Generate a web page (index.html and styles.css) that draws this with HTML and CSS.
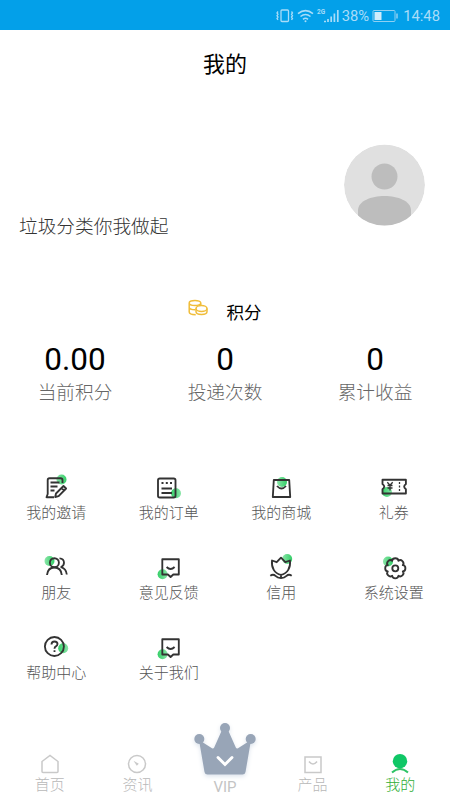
FILE: index.html
```html
<!DOCTYPE html>
<html lang="zh-CN">
<head>
<meta charset="utf-8">
<title>我的</title>
<link rel="stylesheet" href="styles.css">
</head>
<body>
<svg class="defs" width="0" height="0">
  <defs>
    <linearGradient id="blob"><stop offset="0" stop-color="#35cf68"/><stop offset="1" stop-color="#8ae5a8"/></linearGradient>
    <linearGradient id="blobr"><stop offset="0" stop-color="#8ae5a8"/><stop offset="1" stop-color="#35cf68"/></linearGradient>
  </defs>
</svg>
<div class="screen">
  <header class="status">
    <svg width="66" height="18" viewBox="0 0 66 18" fill="none" stroke="#a9dcf8" stroke-width="1.3">
      <rect x="6" y="3" width="7.500" height="11.500" rx="1"/>
      <path d="M3 4.500l-1 1.400 1 1.400-1 1.400 1 1.400-1 1.400 1 1.400M16.500 4.500l1 1.400-1 1.400 1 1.400-1 1.400 1 1.400-1 1.400"/>
      <path d="M23 6.600q7.500-6 15 0M25.500 9.500q5-4 10 0M28 12.300q2.500-2 5 0" stroke-width="1.600"/>
      <circle cx="30.500" cy="14.300" r="1" fill="#a9dcf8" stroke="none"/>
      <path d="M49 14.500h2M53 15v-3M56.200 15V9.500M59.400 15V6.500M62.800 15V3" stroke-width="1.700"/>
      <text x="42" y="7" class="net">2G</text>
    </svg>
    <span class="percent">38%</span>
    <svg class="battery" width="27" height="14" viewBox="0 0 27 14">
      <rect x="1" y="1.500" width="22" height="11" rx="1" fill="none" stroke="#8fd0f2"/>
      <path d="M2.500 3h7v8h-7z" fill="#d0ecfb"/><path d="M25 4.500v5" stroke="#8fd0f2" stroke-width="1.500"/>
    </svg>
    <span class="time">14:48</span>
  </header>
  <h1 class="title">我的</h1>
  <section class="profile">
    <p class="slogan">垃圾分类你我做起</p>
    <svg width="82" height="82" viewBox="0 0 82 82">
      <clipPath id="face"><circle cx="41.500" cy="41" r="40.500"/></clipPath>
      <g clip-path="url(#face)"><circle cx="41.500" cy="41" r="40.500" fill="#e0e0e0"/>
      <circle cx="41.500" cy="32.500" r="13" fill="#bdbdbd"/>
      <path d="M15 82V66C15.500 57 28 52 41.500 52S67.500 57 68 66v16z" fill="#bdbdbd"/></g>
    </svg>
  </section>
  <section class="points">
    <div class="points-head">
      <svg width="20" height="18" viewBox="0 0 20 18" fill="none" stroke="#f0bd3a" stroke-width="1.500">
        <path d="M1.200 4C1.200 .600 12.800 .600 12.800 4M1.200 4c0 3.400 11.600 3.400 11.600 0M1.200 4v9c0 1.600 2.700 2.700 6.500 2.700M1.200 8c0 1.800 2.600 2.800 6 2.800M12.800 4v2"/>
        <ellipse cx="13.500" cy="9.500" rx="5.500" ry="3"/><path d="M8 9.500v3c0 4 11 4 11 0v-3"/>
      </svg>
      <span>积分</span>
    </div>
    <div class="stats">
      <div class="stat"><b>0.00</b><span>当前积分</span></div>
      <div class="stat"><b>0</b><span>投递次数</span></div>
      <div class="stat"><b>0</b><span>累计收益</span></div>
    </div>
  </section>
  <nav class="menu">
    <a class="item"><svg class="icon" viewBox="0 0 32 28"><circle cx="21.500" cy="6.500" r="5" fill="url(#blobr)"/><path d="M22.500 10V7q0-1.800-1.800-1.800H9.500Q7.700 5.200 7.700 7v14l-1.200 3.200h7.500M10.500 9.500h9M10.500 13.500h7M10.500 17.500h4M16 20.500l7.500-7.500 2.600 2.500-7.500 7.700-3.400.8zM21.500 15l2.600 2.600"/></svg><span>我的邀请</span></a>
    <a class="item"><svg class="icon" viewBox="0 0 32 28"><circle cx="23" cy="20.300" r="5" fill="url(#blob)"/><rect x="5" y="5.500" width="17.500" height="19" rx="1.800"/><path d="M8.500 10h2M12.800 10h2M17 10h2M8.500 15.500h10.500M8.500 20h10.500"/></svg><span>我的订单</span></a>
    <a class="item"><svg class="icon" viewBox="0 0 32 28"><circle cx="17" cy="9" r="5" fill="url(#blobr)"/><path d="M8.800 7h15.400l1 17H7.800zM12 13q4.500 5 9 0"/></svg><span>我的商城</span></a>
    <a class="item"><svg class="icon" viewBox="0 0 32 28"><circle cx="9" cy="19" r="5" fill="url(#blob)"/><path d="M4.500 6.700h23.400v4.200q-3.500 2.600 0 5.400v4.200H4.500v-4.200q3.500-2.800 0-5.400z"/><path d="M9.300 9.300l2.700 3 2.700-3M12 12.300V17.500M9.500 12.500h5M9.500 15h5M21.500 9v2M21.500 12.500v2M21.500 16v2" stroke-width="1.300"/></svg><span>礼券</span></a>
    <a class="item"><svg class="icon" viewBox="0 0 32 28"><circle cx="9.500" cy="8" r="5" fill="url(#blobr)"/><circle cx="14.400" cy="9.700" r="4.500"/><path d="M7 22q.8-7.500 7.400-7.500T21.800 22M19.500 5.300q4.500.2 4.500 4.500 0 2.700-2.800 4.300 5 1.500 5.600 7.400"/></svg><span>朋友</span></a>
    <a class="item"><svg class="icon" viewBox="0 0 32 28"><circle cx="9.600" cy="21.300" r="5" fill="url(#blob)"/><path d="M9.300 6.200h16.500v15.300h-5.500L17.600 24l-2.700-2.500H9.300zM13.600 14q4 4 8 0"/></svg><span>意见反馈</span></a>
    <a class="item"><svg class="icon" viewBox="0 0 32 28"><circle cx="22.200" cy="6" r="5" fill="url(#blobr)"/><path d="M7 7.500l4.700 1.700L16 4.700l4.300 4.500L25 7.500c.8 7-2.500 13.300-9 14.300-6.500-1-9.800-7.300-9-14.300zM16 22v3M5.300 22.700q3-2 5.200.2 2 2 5.500 2.300 3.500-.3 5.500-2.300 2.200-2.200 5.200-.2"/></svg><span>信用</span></a>
    <a class="item"><svg class="icon" viewBox="0 0 32 28"><circle cx="10" cy="8.500" r="5" fill="url(#blobr)"/><circle cx="17.300" cy="15.300" r="3"/><path d="M14.200 7.800Q14.400 5.200 17.300 5.200T20.400 7.800Q22.400 6.100 24.440 8.160T24.800 12.200Q27.400 12.400 27.400 15.300T24.800 18.400Q26.500 20.400 24.440 22.440T20.400 22.800Q20.200 25.400 17.300 25.400T14.200 22.800Q12.200 24.500 10.160 22.440T9.800 18.400Q7.200 18.200 7.200 15.300T9.800 12.200Q8.100 10.200 10.160 8.160T14.200 7.800z"/></svg><span>系统设置</span></a>
    <a class="item"><svg class="icon" viewBox="0 0 32 28"><circle cx="23.200" cy="15.200" r="5" fill="url(#blob)"/><circle cx="14.400" cy="13.500" r="9.500"/><path d="M11.500 11.500q0-3 3-3t3 2.600q0 1.500-1.600 2.300-1.400.7-1.400 2.300M14.500 17.200v1.800"/></svg><span>帮助中心</span></a>
    <a class="item"><svg class="icon" viewBox="0 0 32 28"><circle cx="9.600" cy="21.300" r="5" fill="url(#blob)"/><path d="M9.300 6.200h16.500v15.300h-5.500L17.600 24l-2.700-2.500H9.300zM13.600 14q4 4 8 0"/></svg><span>关于我们</span></a>
  </nav>
  <footer class="tabs">
    <a class="tab"><svg class="tab-icon" viewBox="0 0 22 22"><path d="M3 8.500L11 2.500l8 6v10q0 1-1 1H4q-1 0-1-1z"/></svg><span>首页</span></a>
    <a class="tab"><svg class="tab-icon" viewBox="0 0 22 22"><circle cx="11" cy="11" r="8.500"/><path d="M7.500 7.700l5.300 3-2 2z" fill="#c9c9c9" stroke="none"/></svg><span>资讯</span></a>
    <a class="tab vip"><svg class="crown" width="66" height="56" viewBox="0 0 66 56" fill="#98a5b7"><circle cx="33" cy="7" r="5"/><circle cx="7.300" cy="18" r="5"/><circle cx="58.700" cy="18" r="5"/><path d="M7 19l13 8.300q1.500.7 2.200-.8L30 9h6l7.800 17.500q.7 1.500 2.200.8L59 19l-5.500 32q-.5 2.500-3 2.500h-35q-2.500 0-3-2.500z"/><path d="M26 36.500l7 7 7-7" fill="none" stroke="#fff" stroke-width="3" stroke-linecap="round"/></svg><span>VIP</span></a>
    <a class="tab"><svg class="tab-icon" viewBox="0 0 22 22"><path d="M3 4h16v15.500H3zM7 8.500q4 5 8 0"/></svg><span>产品</span></a>
    <a class="tab active"><svg class="tab-icon" viewBox="0 0 22 22"><circle cx="11" cy="8.200" r="7.200" fill="#10c766" stroke="none"/><path d="M3 19.500q8-7 16 0" stroke="#2dc466" stroke-width="2"/></svg><span>我的</span></a>
  </footer>
</div>
</body>
</html>
```
FILE: styles.css
```css
* { box-sizing: border-box; }
body { margin: 0; background: #fff; font-family: Roboto, "Noto Sans CJK SC", sans-serif; font-weight: 300; color: #000; }
.defs { display: block; height: 0; }
.screen { width: 450px; height: 800px; display: flex; flex-direction: column; overflow: hidden; }
.status { height: 30px; flex: none; background: #03a0e9; color: #a9dcf8; display: flex; align-items: center; justify-content: flex-end; padding: 2px 10px 0 0; font-size: 14.8px; font-weight: 400; line-height: 20px; }
.net { font-size: 6.5px; font-weight: 700; fill: #a9dcf8; stroke: none; }
.percent { margin-left: 1px; }
.battery { margin: 0 4px 0 3px; }
.title { margin: 0; height: 66px; flex: none; line-height: 69px; text-align: center; font-size: 22px; font-weight: 400; }
.profile { height: 184px; flex: none; display: flex; justify-content: space-between; align-items: flex-start; padding: 48px 25px 0 19px; }
.slogan { margin: 69px 0 0; font-size: 18.7px; line-height: 28px; color: #333; }
.points { height: 193px; flex: none; padding-top: 18px; }
.points-head { height: 28px; display: flex; justify-content: center; align-items: flex-start; gap: 19px; font-size: 17.5px; font-weight: 400; line-height: 28px; padding: 1px 1px 0 0; }
.stats { display: grid; grid-template-columns: repeat(3, 1fr); margin-top: 13px; }
.stat { display: flex; flex-direction: column; align-items: center; }
.stat b { font-size: 31.5px; line-height: 41px; font-weight: 400; }
.stat span { font-size: 18.7px; line-height: 26px; color: #666; }
.menu { flex: none; height: 240px; display: grid; grid-template-columns: repeat(4, 1fr); grid-auto-rows: 80px; }
.item { display: flex; flex-direction: column; align-items: center; font-size: 15px; line-height: 24px; color: #555; }
.icon { width: 32px; height: 28px; fill: none; stroke: #333; stroke-width: 1.85; stroke-linejoin: round; }
.icon circle[fill] { stroke: none; }
.tabs { flex: 1; display: flex; padding: 0 6px; align-items: flex-end; }
.tab { flex: 1; display: flex; flex-direction: column; align-items: center; padding-bottom: 5px; font-size: 15px; line-height: 20px; color: #b8b8b8; }
.tab-icon { width: 22px; height: 22px; fill: none; stroke: #c9c9c9; stroke-width: 1.5; }
.vip { padding-bottom: 3px; font-weight: 400; color: #c4c4c4; }
.crown { filter: drop-shadow(0 2px 2px #dce3ec); }
.tab.active { color: #2fae35; }
```
